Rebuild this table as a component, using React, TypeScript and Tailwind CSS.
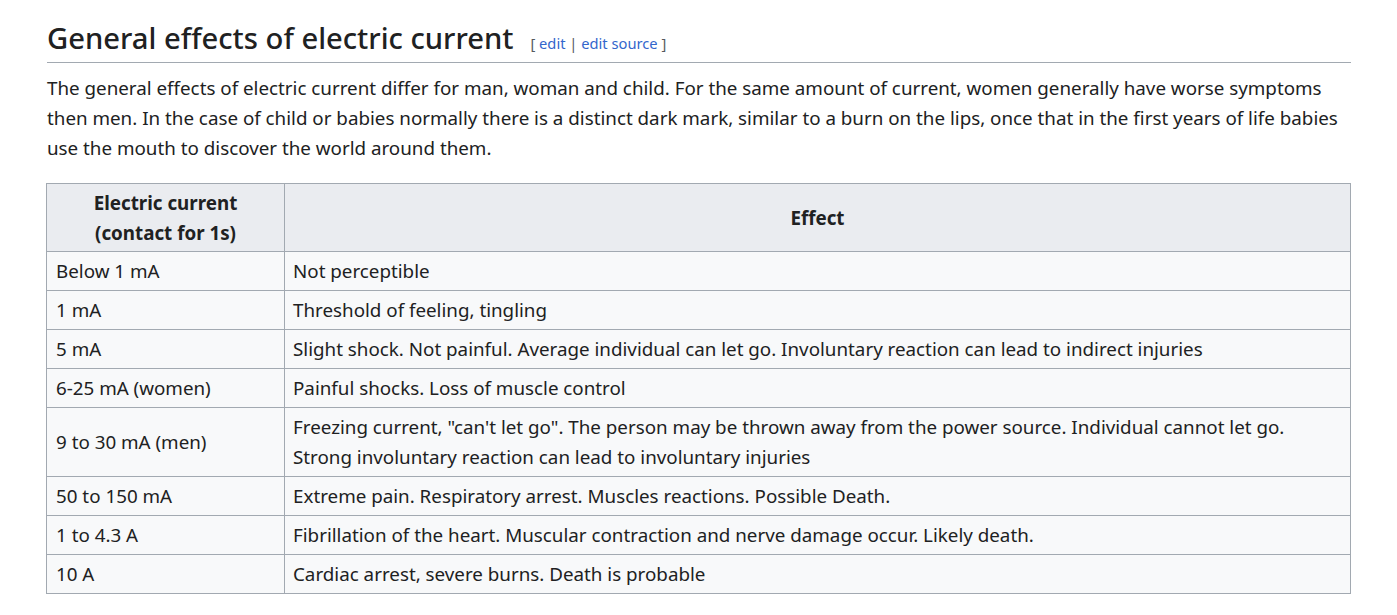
const rows: [string, string][] = [
  ['Below 1 mA', 'Not perceptible'],
  ['1 mA', 'Threshold of feeling, tingling'],
  ['5 mA', 'Slight shock. Not painful. Average individual can let go. Involuntary reaction can lead to indirect injuries'],
  ['6-25 mA (women)', 'Painful shocks. Loss of muscle control'],
  ['9 to 30 mA (men)', 'Freezing current, "can\'t let go". The person may be thrown away from the power source. Individual cannot let go. Strong involuntary reaction can lead to involuntary injuries'],
  ['50 to 150 mA', 'Extreme pain. Respiratory arrest. Muscles reactions. Possible Death.'],
  ['1 to 4.3 A', 'Fibrillation of the heart. Muscular contraction and nerve damage occur. Likely death.'],
  ['10 A', 'Cardiac arrest, severe burns. Death is probable'],
];

export default function App() {
  return (
    <div
      className="min-h-screen bg-white text-[#202122] pl-[47px] pr-[46px] pt-[18px]"
      style={{ fontFamily: '"Noto Sans", "Open Sans", sans-serif' }}
    >
      <div className="flex items-baseline border-b border-[#a2a9b1] pb-[4px]">
        <h2 className="text-[29.2px] leading-[40px] font-medium">General effects of electric current</h2>
        <span className="ml-[17px] text-[14.7px] text-[#54595d]">
          [ <a className="text-[#3366cc]">edit</a> | <a className="text-[#3366cc]">edit source</a> ]
        </span>
      </div>
      <p className="mt-[10px] text-[18.8px] leading-[30px]">
        The general effects of electric current differ for man, woman and child. For the same amount of current, women generally have worse symptoms then men. In the case of child or babies normally there is a distinct dark mark, similar to a burn on the lips, once that in the first years of life babies use the mouth to discover the world around them.
      </p>
      <table className="mt-[20px] -ml-px w-[1305px] border-collapse text-[18.8px] leading-[30px]">
        <thead>
          <tr className="bg-[#eaecf0]">
            <th className="w-[238px] border border-[#a2a9b1] px-[8px] py-[3.5px] font-bold">
              Electric current
              <br />
              (contact for 1s)
            </th>
            <th className="border border-[#a2a9b1] px-[8px] py-[3.5px] font-bold">Effect</th>
          </tr>
        </thead>
        <tbody>
          {rows.map(([a, b]) => (
            <tr key={a} className="bg-[#f8f9fa]">
              <td className="border border-[#a2a9b1] px-[9px] py-[4px]">{a}</td>
              <td className="border border-[#a2a9b1] px-[8px] py-[4px]">{b}</td>
            </tr>
          ))}
        </tbody>
      </table>
    </div>
  );
}
